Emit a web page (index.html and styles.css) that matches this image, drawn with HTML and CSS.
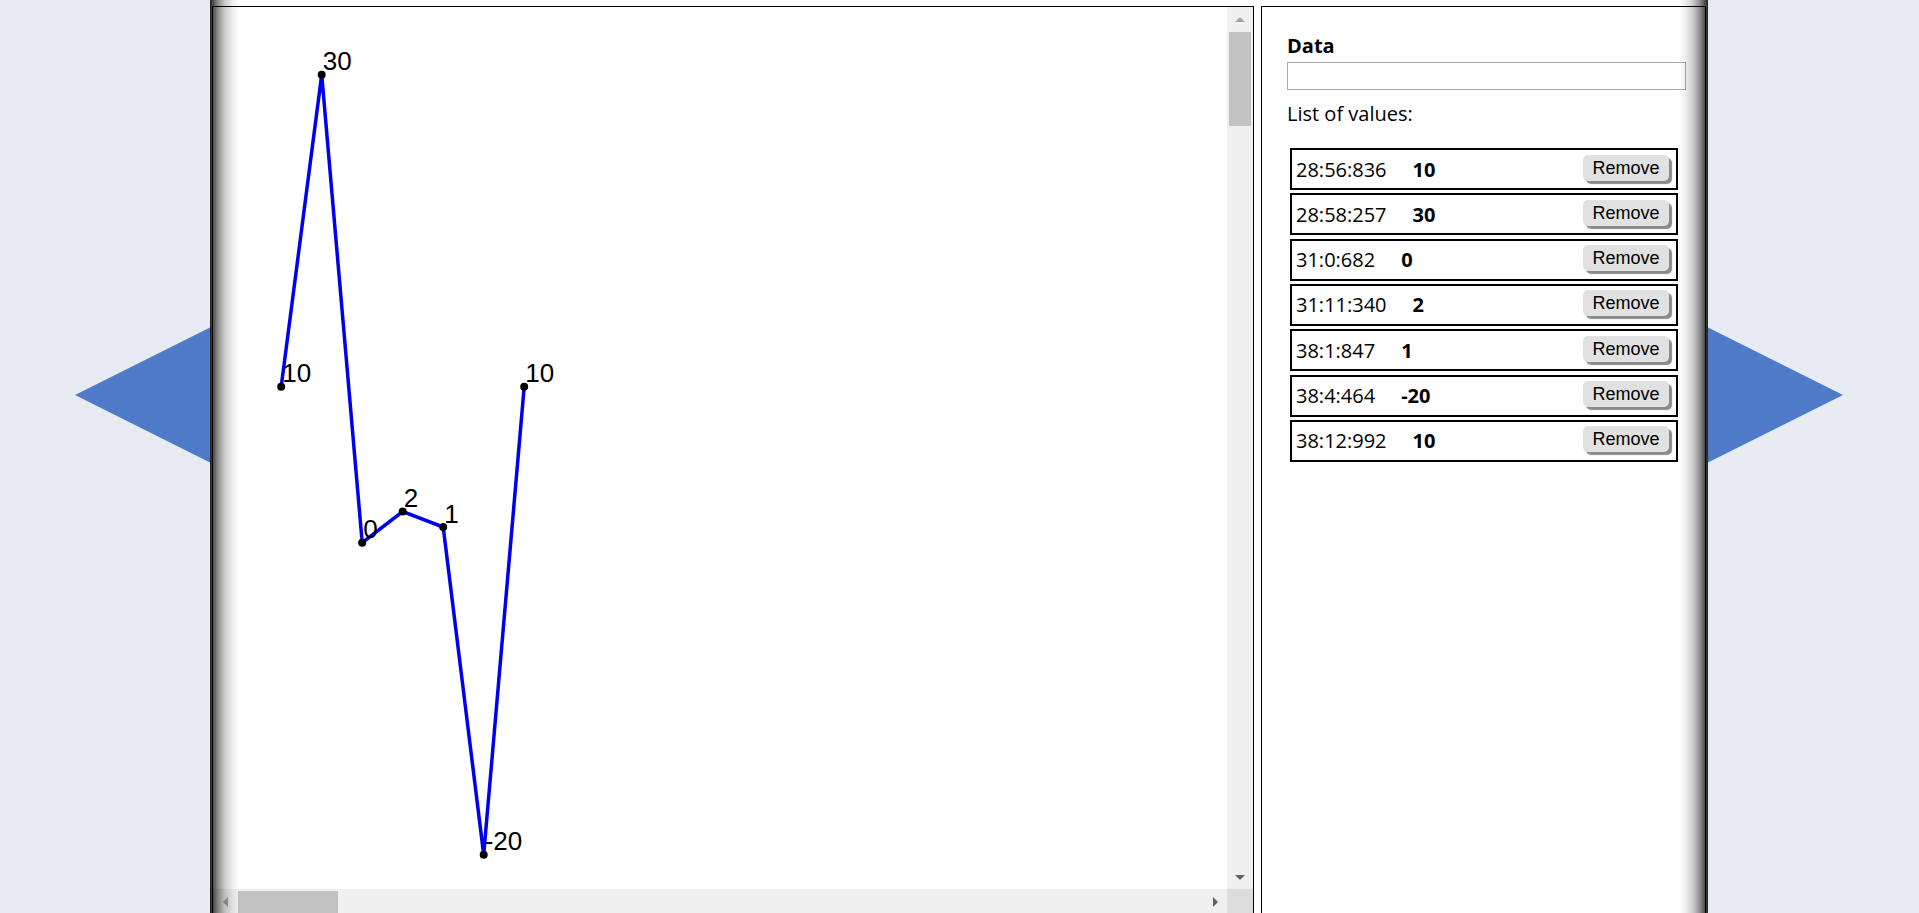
FILE: index.html
```html
<!DOCTYPE html>
<html lang="en">
<head>
<meta charset="utf-8">
<title>Data chart</title>
<link rel="stylesheet" href="styles.css">
</head>
<body>
<div class="page">
  <div class="nav nav-prev"></div>
  <div class="frame">
    <div class="chart-panel">
      <div class="chart-view">
        <svg class="chart" width="1014" height="882" viewBox="0 0 1014 882">
          <polyline class="line" points="68.2,379.7 108.7,67.7 149.2,535.7 189.7,504.5 230.2,520.1 270.7,847.7 311.2,379.7"/>
          <circle class="dot" cx="68.2" cy="379.7" r="4"/>
          <circle class="dot" cx="108.7" cy="67.7" r="4"/>
          <circle class="dot" cx="149.2" cy="535.7" r="4"/>
          <circle class="dot" cx="189.7" cy="504.5" r="4"/>
          <circle class="dot" cx="230.2" cy="520.1" r="4"/>
          <circle class="dot" cx="270.7" cy="847.7" r="4"/>
          <circle class="dot" cx="311.2" cy="379.7" r="4"/>
          <text class="lbl" x="69.2" y="375.2">10</text>
          <text class="lbl" x="109.7" y="63.2">30</text>
          <text class="lbl" x="150.2" y="531.2">0</text>
          <text class="lbl" x="190.7" y="500">2</text>
          <text class="lbl" x="231.2" y="515.6">1</text>
          <text class="lbl" x="271.7" y="843.2">-20</text>
          <text class="lbl" x="312.2" y="375.2">10</text>
        </svg>
      </div>
      <div class="vscroll">
        <div class="sb-btn"><span class="tri tri-up"></span></div>
        <div class="vthumb"></div>
        <div class="sb-space"></div>
        <div class="sb-btn"><span class="tri tri-down"></span></div>
      </div>
      <div class="hscroll">
        <div class="sb-btn"><span class="tri tri-left"></span></div>
        <div class="hthumb"></div>
        <div class="sb-space"></div>
        <div class="sb-btn"><span class="tri tri-right"></span></div>
      </div>
      <div class="corner"></div>
    </div>
    <div class="data-panel">
      <label class="data-label" for="data">Data</label>
      <input class="data-input" id="data" type="text">
      <div class="list-title">List of values:</div>
      <ul class="values">
        <li class="value-row"><span class="time">28:56:836</span><b class="val">10</b><button class="remove">Remove</button></li>
        <li class="value-row"><span class="time">28:58:257</span><b class="val">30</b><button class="remove">Remove</button></li>
        <li class="value-row"><span class="time">31:0:682</span><b class="val">0</b><button class="remove">Remove</button></li>
        <li class="value-row"><span class="time">31:11:340</span><b class="val">2</b><button class="remove">Remove</button></li>
        <li class="value-row"><span class="time">38:1:847</span><b class="val">1</b><button class="remove">Remove</button></li>
        <li class="value-row"><span class="time">38:4:464</span><b class="val">-20</b><button class="remove">Remove</button></li>
        <li class="value-row"><span class="time">38:12:992</span><b class="val">10</b><button class="remove">Remove</button></li>
      </ul>
    </div>
  </div>
  <div class="nav nav-next"></div>
</div>
</body>
</html>
```

FILE: styles.css
```css
html, body {
  margin: 0;
  height: 100%;
  overflow: hidden;
}

body {
  background: #e8ebf1;
  font-family: "Open Sans", "Noto Sans", sans-serif;
  color: #000;
}

.page {
  display: flex;
  align-items: flex-start;
  height: 913px;
  padding-left: 75px;
}

.nav {
  flex: none;
  width: 0;
  height: 0;
  margin-top: 320px;
  border-top: 75px solid transparent;
  border-bottom: 75px solid transparent;
}

.nav-prev {
  border-right: 150px solid #4f7bc9;
  margin-right: -15px;
}

.nav-next {
  border-left: 150px solid #4f7bc9;
  margin-left: -15px;
}

.frame {
  position: relative;
  z-index: 1;
  flex: none;
  display: flex;
  gap: 7px;
  width: 1498px;
  height: 913px;
  box-sizing: border-box;
  padding: 6px 2px 0;
  background: #fff;
  overflow: hidden;
}

.frame::before,
.frame::after {
  content: "";
  position: absolute;
  top: 0;
  bottom: 0;
  width: 32px;
  z-index: 2;
  pointer-events: none;
}

.frame::before {
  left: 0;
  background: linear-gradient(to right,
    rgba(0, 0, 0, 0.88) 0,
    rgba(0, 0, 0, 0.7) 3px,
    rgba(0, 0, 0, 0.45) 8px,
    rgba(0, 0, 0, 0.2) 15px,
    rgba(0, 0, 0, 0.06) 23px,
    rgba(0, 0, 0, 0) 30px);
}

.frame::after {
  right: 0;
  background: linear-gradient(to left,
    rgba(0, 0, 0, 0.88) 0,
    rgba(0, 0, 0, 0.7) 3px,
    rgba(0, 0, 0, 0.45) 8px,
    rgba(0, 0, 0, 0.2) 15px,
    rgba(0, 0, 0, 0.06) 23px,
    rgba(0, 0, 0, 0) 30px);
}

/* chart panel */
.chart-panel {
  flex: none;
  width: 1042px;
  height: 910px;
  box-sizing: border-box;
  border: 1px solid #000;
  display: grid;
  grid-template-columns: 1014px 26px;
  grid-template-rows: 882px 26px;
}

.chart-view {
  overflow: hidden;
  background: #fff;
}

.chart {
  display: block;
}

.line {
  fill: none;
  stroke: #0000f0;
  stroke-width: 3.5;
}

.dot {
  fill: #000;
}

.lbl {
  font-family: "Liberation Sans", Arial, sans-serif;
  font-size: 26px;
  fill: #000;
}

.vscroll {
  display: flex;
  flex-direction: column;
  background: #f0f0f0;
}

.hscroll {
  display: flex;
  background: #f0f0f0;
}

.sb-btn {
  flex: none;
  display: flex;
  align-items: center;
  justify-content: center;
}

.vscroll .sb-btn {
  height: 24px;
}

.hscroll .sb-btn {
  width: 24px;
}

.sb-space {
  flex: 1;
}

.vthumb {
  flex: none;
  height: 94px;
  margin: 1px 2px 0;
  background: #c2c2c2;
}

.hthumb {
  flex: none;
  width: 100px;
  margin: 2px 0 2px 1px;
  background: #c2c2c2;
}

.corner {
  background: #dcdcdc;
}

.tri {
  width: 0;
  height: 0;
}

.tri-up {
  border-left: 5px solid transparent;
  border-right: 5px solid transparent;
  border-bottom: 5px solid #a3a3a3;
}

.tri-down {
  border-left: 5px solid transparent;
  border-right: 5px solid transparent;
  border-top: 5px solid #606060;
}

.tri-left {
  border-top: 5px solid transparent;
  border-bottom: 5px solid transparent;
  border-right: 5px solid #a3a3a3;
}

.tri-right {
  border-top: 5px solid transparent;
  border-bottom: 5px solid transparent;
  border-left: 5px solid #606060;
}

/* data panel */
.data-panel {
  flex: none;
  width: 445px;
  height: 910px;
  box-sizing: border-box;
  border: 1px solid #000;
  padding: 25px 19px 0 25px;
  background: #fff;
}

.data-label {
  display: block;
  font-weight: 700;
  font-size: 20px;
  line-height: 27px;
}

.data-input {
  display: block;
  box-sizing: border-box;
  width: 100%;
  height: 28px;
  margin: 3px 0 0;
  padding: 0 4px;
  border: 1px solid #a9a9a9;
  background: #fff;
}

.list-title {
  margin-top: 10px;
  font-size: 20px;
  line-height: 27px;
}

.values {
  list-style: none;
  margin: 21px 8px 0 3px;
  padding: 0;
}

.value-row {
  display: flex;
  align-items: center;
  height: 42px;
  box-sizing: border-box;
  border: 2px solid #000;
  padding: 0 7px 0 4px;
  margin-bottom: 3.33px;
  font-size: 20px;
  line-height: 27px;
}

.time {
  margin-right: 26px;
}

.val {
  font-weight: 700;
}

.remove {
  margin-left: auto;
  margin-bottom: 3px;
  width: 86px;
  height: 26px;
  padding: 0;
  border: 0;
  border-radius: 5px;
  background: #e1e1e1;
  box-shadow: 3px 3px 1px #8a8a8a;
  color: #000;
  font-family: "Liberation Sans", Arial, sans-serif;
  font-size: 18px;
  line-height: 26px;
}
```
